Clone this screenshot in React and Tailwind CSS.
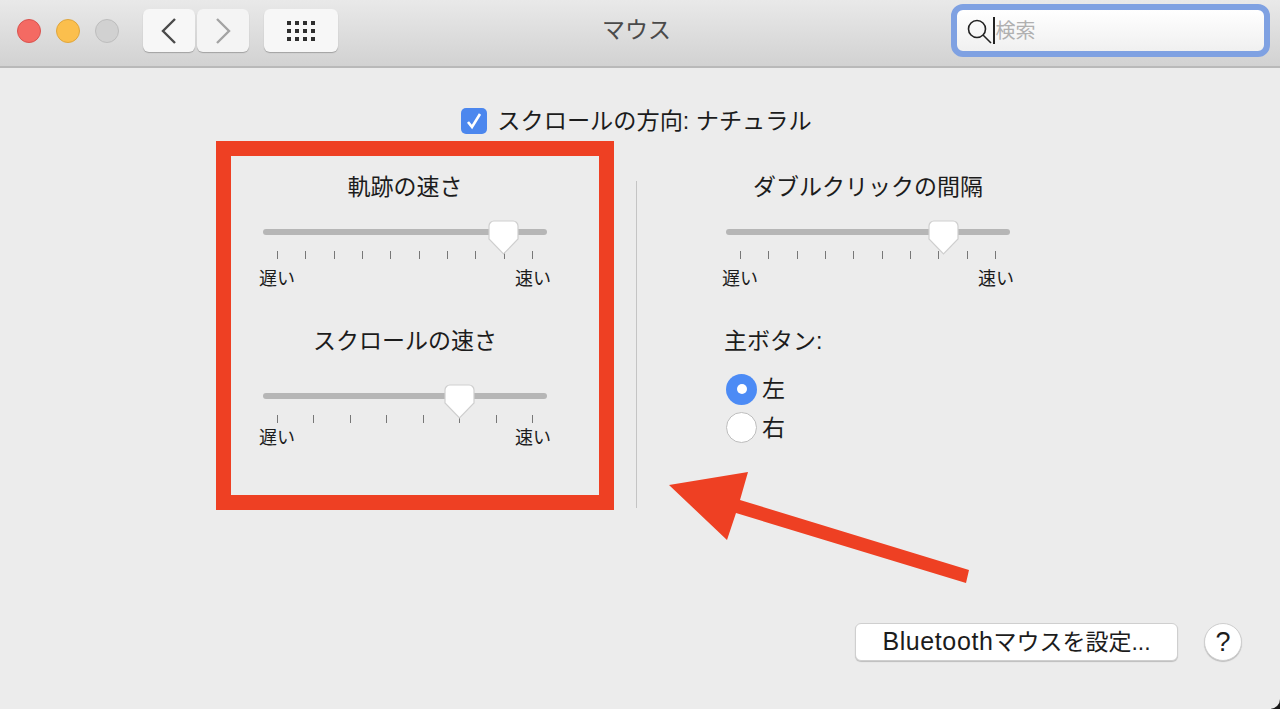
const jp = "font-['Liberation_Sans','Noto_Sans_CJK_JP',sans-serif]";

function SliderBlock({ title, ticks, thumb, trackGap = "mt-[16px]", labelGap = "mt-[6px]" }) {
  return (
    <div className="flex w-[292px] flex-col items-center">
      <div className="h-[34px] text-[23px] leading-[34px] text-[#1c1c1c]">{title}</div>
      <div className={`relative ${trackGap} h-[40px] w-full px-[4px]`}>
        <div className="mt-[9px] h-[6px] rounded-full bg-[#b6b6b6]" />
        <div className="mt-[16px] flex justify-between px-[14px]">
          {Array.from({ length: ticks }).map((_, i) => (
            <div key={i} className="h-2 w-px bg-[#777777]" />
          ))}
        </div>
        <svg
          className="absolute top-0"
          style={{ left: thumb }}
          width="31"
          height="35"
          viewBox="0 0 31 35"
        >
          <path
            d="M6 1h19a5 5 0 0 1 5 5v13L15.5 34 1 19V6a5 5 0 0 1 5-5z"
            fill="#ffffff"
            stroke="#cfcfcf"
            strokeWidth="1.2"
          />
        </svg>
      </div>
      <div className={`${labelGap} flex w-full justify-between text-[18px] leading-[26px] text-[#1c1c1c]`}>
        <span>遅い</span>
        <span>速い</span>
      </div>
    </div>
  );
}

function Radio({ on, label }) {
  return (
    <div className="flex h-[38.5px] items-center gap-[5px]">
      {on ? (
        <div className="flex h-[31px] w-[31px] items-center justify-center rounded-full bg-[#4c8bf5]">
          <div className="h-[10px] w-[10px] rounded-full bg-white" />
        </div>
      ) : (
        <div className="h-[31px] w-[31px] rounded-full border border-[#bdbdbd] bg-white" />
      )}
      <span className="text-[23px] text-[#1c1c1c]">{label}</span>
    </div>
  );
}

function Grid() {
  return (
    <div className="grid grid-cols-4 gap-x-[4px] gap-y-[4px]">
      {Array.from({ length: 12 }).map((_, i) => (
        <div key={i} className="h-[4px] w-[4px] bg-[#2e2e2e]" />
      ))}
    </div>
  );
}

export default function App() {
  return (
    <div className={`relative h-[709px] w-[1280px] overflow-hidden bg-[#1a1a1a] ${jp}`}>
      <div className="flex h-full flex-col overflow-hidden rounded-br-[10px] bg-[#ececec]">
        {/* title bar */}
        <div className="flex h-[68px] shrink-0 items-center border-b-2 border-[#b9b9b9] bg-gradient-to-b from-[#e9e9e9] to-[#d2d2d2] pb-[5px] pl-[17px] pr-[10px]">
          <div className="flex gap-[15px]">
            <div className="h-[24px] w-[24px] rounded-full border border-[#d9534f] bg-[#f46a63]" />
            <div className="h-[24px] w-[24px] rounded-full border border-[#dfa63d] bg-[#fbbf4d]" />
            <div className="h-[24px] w-[24px] rounded-full border border-[#bdbdbd] bg-[#d1d1d1]" />
          </div>
          <div className="ml-[24px] flex gap-[2px]">
            <div className="flex h-[43px] w-[52px] items-center justify-center rounded-[6px] bg-[#f7f7f7] shadow-[0_1px_1px_rgba(0,0,0,0.25)]">
              <svg width="16" height="26" viewBox="0 0 16 26" fill="none" stroke="#4a4a4a" strokeWidth="2.4">
                <path d="M14 1L2 13l12 12" />
              </svg>
            </div>
            <div className="flex h-[43px] w-[52px] items-center justify-center rounded-[6px] bg-[#f4f4f4] shadow-[0_1px_1px_rgba(0,0,0,0.25)]">
              <svg width="16" height="26" viewBox="0 0 16 26" fill="none" stroke="#a3a3a3" strokeWidth="2.4">
                <path d="M2 1l12 12L2 25" />
              </svg>
            </div>
          </div>
          <div className="ml-[15px] flex h-[43px] w-[74px] items-center justify-center rounded-[6px] bg-[#f7f7f7] shadow-[0_1px_1px_rgba(0,0,0,0.25)]">
            <Grid />
          </div>
          <div className="flex-1 pr-[16px] text-center text-[23px] text-[#4a4a4a]">マウス</div>
          <div className="flex h-[53px] w-[319px] items-center rounded-[12px] border-[6px] border-[#7fa1e2] bg-gradient-to-b from-[#ffffff] to-[#f0f0f0] pl-[10px]">
            <svg width="26" height="28" viewBox="0 0 26 28" fill="none" stroke="#222222" strokeWidth="1.6">
              <circle cx="10" cy="12" r="8.5" />
              <path d="M16 18l8 8" />
            </svg>
            <div className="h-[27px] w-[1.5px] bg-[#222222]" />
            <span className="ml-[1px] text-[20px] text-[#b0b0b0]">検索</span>
          </div>
        </div>

        {/* content */}
        <div className="flex flex-1 flex-col">
          <div className="mt-[37px] flex items-center justify-center gap-[10px] pr-[7px]">
            <div className="flex h-[26px] w-[26px] items-center justify-center rounded-[5px] bg-[#4c87ee]">
              <svg width="18" height="18" viewBox="0 0 18 18" fill="none" stroke="#ffffff" strokeWidth="2.6">
                <path d="M3 10l4 5 8-13" />
              </svg>
            </div>
            <span className="text-[23.2px] leading-[32px] text-[#1c1c1c]">スクロールの方向: ナチュラル</span>
          </div>

          <div className="mt-[33px] flex pl-[259px]">
            <div className="flex flex-col gap-[32px]">
              <SliderBlock title="軌跡の速さ" ticks={10} thumb="229px" />
              <SliderBlock title="スクロールの速さ" ticks={8} thumb="185px" trackGap="mt-[26px]" labelGap="mt-[1px]" />
            </div>
            <div className="ml-[85px] mt-[11px] h-[327px] w-px bg-[#c4c4c4]" />
            <div className="ml-[85px] flex flex-col">
              <SliderBlock title="ダブルクリックの間隔" ticks={10} thumb="206px" />
              <div className="ml-[2px] mt-[32px] text-[23px] leading-[34px] text-[#1c1c1c]">主ボタン:</div>
              <div className="ml-[4px] mt-[12px] flex flex-col">
                <Radio on label="左" />
                <Radio label="右" />
              </div>
            </div>
          </div>

          <div className="mt-auto mb-[48px] flex items-center justify-end gap-[26px] pr-[38px]">
            <div className="flex h-[38px] w-[323px] items-center justify-center rounded-[6px] border border-[#cfcfcf] bg-white text-[23px] text-[#1c1c1c] shadow-[0_1px_1px_rgba(0,0,0,0.2)]">
              <span className="text-[25px] tracking-[0.6px]">Bluetooth</span>マウスを設定...
            </div>
            <div className="flex h-[38px] w-[38px] items-center justify-center rounded-full border border-[#cfcfcf] bg-white text-[27px] text-[#1c1c1c] shadow-[0_1px_1px_rgba(0,0,0,0.2)]">
              ?
            </div>
          </div>
        </div>
      </div>

      {/* red annotations */}
      <div className="absolute left-[216px] top-[141px] h-[369px] w-[398px] border-[15px] border-[#ee4023]" />
      <svg className="absolute left-[660px] top-[460px]" width="320" height="130" viewBox="660 460 320 130">
        <polygon
          points="669,485 748,472 740,500 969,570 966,583 736,513 727,540"
          fill="#ee4023"
        />
      </svg>
    </div>
  );
}
